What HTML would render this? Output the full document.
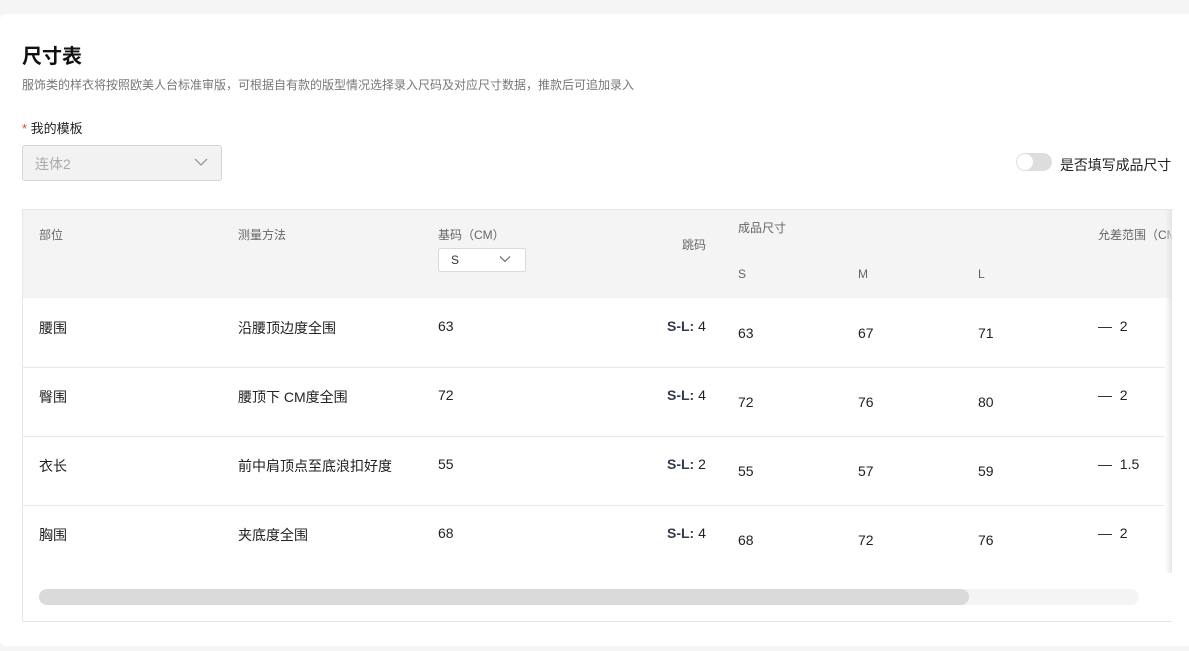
<!DOCTYPE html>
<html><head><meta charset="utf-8"><style>
*{margin:0;padding:0;box-sizing:border-box}
body{width:1189px;height:651px;background:#f5f5f5;font-family:"Liberation Sans","Noto Sans CJK SC",sans-serif;position:relative;overflow:hidden;color:#222}
.a{position:absolute;white-space:nowrap}
.card{position:absolute;left:0;top:14px;width:1189px;height:632px;background:#fff;border-radius:6px 0 0 6px}
.h{font-size:12px;color:#666}
.c{font-size:14px;color:#222}
.b{font-size:14px;color:#222}
.b b{color:#333a4d}
.line{position:absolute;left:23px;width:1142px;height:1px;background:#e8e8e8}
</style></head><body>
<div class="card"></div>
<div class="a" style="left:22px;top:40px;font-size:20px;font-weight:bold;color:#111">尺寸表</div>
<div class="a" style="left:22px;top:76px;font-size:12px;color:#777">服饰类的样衣将按照欧美人台标准审版，可根据自有款的版型情况选择录入尺码及对应尺寸数据，推款后可追加录入</div>
<div class="a" style="left:22px;top:118px;font-size:13px;color:#222"><span style="color:#e0463a">*</span> 我的模板</div>
<div class="a" style="left:22px;top:145px;width:200px;height:36px;background:#f2f2f2;border:1px solid #d6d6d6;border-radius:3px"></div>
<div class="a" style="left:35px;top:154px;font-size:14px;color:#aaa">连体2</div>
<svg class="a" style="left:194px;top:157px" width="14" height="10"><path d="M1 2l6 6 6-6" fill="none" stroke="#999" stroke-width="1.3"/></svg>
<div class="a" style="left:1016px;top:153px;width:36px;height:18px;border-radius:9px;background:#ddd"></div>
<div class="a" style="left:1017px;top:154px;width:16px;height:16px;border-radius:8px;background:#fff"></div>
<div class="a" style="left:1060px;top:155px;font-size:14px;color:#222;letter-spacing:-0.1px">是否填写成品尺寸</div>

<div class="a" style="left:22px;top:209px;width:1151px;height:413px;border:1px solid #e6e6e6;border-right:none;background:#fff"></div>
<div class="a" style="left:23px;top:210px;width:1149px;height:88px;background:#f4f4f4"></div>
<div class="a h" style="left:39px;top:226px">部位</div>
<div class="a h" style="left:238px;top:226px">测量方法</div>
<div class="a h" style="left:438px;top:226px">基码（CM）</div>
<div class="a" style="left:438px;top:248px;width:88px;height:24px;background:#fff;border:1px solid #d9d9d9;border-radius:2px"></div>
<div class="a" style="left:451px;top:253px;font-size:12px;color:#333">S</div>
<svg class="a" style="left:499px;top:255px" width="12" height="9"><path d="M1 1.5l5 5 5-5" fill="none" stroke="#777" stroke-width="1.3"/></svg>
<div class="a h" style="left:682px;top:236px">跳码</div>
<div class="a h" style="left:738px;top:219px">成品尺寸</div>
<div class="a h" style="left:738px;top:267px">S</div>
<div class="a h" style="left:858px;top:267px">M</div>
<div class="a h" style="left:978px;top:267px">L</div>
<div class="a h" style="left:1098px;top:226px">允差范围（CM</div>

<div class="line" style="top:367px"></div>
<div class="line" style="top:436px"></div>
<div class="line" style="top:505px"></div>

<div class="a c" style="left:39px;top:318px">腰围</div><div class="a c" style="left:238px;top:318px">沿腰顶边度全围</div><div class="a c" style="left:438px;top:318px">63</div><div class="a b" style="left:667px;top:318px"><b>S-L:</b> 4</div><div class="a c" style="left:738px;top:325px">63</div><div class="a c" style="left:858px;top:325px">67</div><div class="a c" style="left:978px;top:325px">71</div><div class="a c" style="left:1098px;top:318px">—&nbsp; 2</div>
<div class="a c" style="left:39px;top:387px">臀围</div><div class="a c" style="left:238px;top:387px">腰顶下 CM度全围</div><div class="a c" style="left:438px;top:387px">72</div><div class="a b" style="left:667px;top:387px"><b>S-L:</b> 4</div><div class="a c" style="left:738px;top:394px">72</div><div class="a c" style="left:858px;top:394px">76</div><div class="a c" style="left:978px;top:394px">80</div><div class="a c" style="left:1098px;top:387px">—&nbsp; 2</div>
<div class="a c" style="left:39px;top:456px">衣长</div><div class="a c" style="left:238px;top:456px">前中肩顶点至底浪扣好度</div><div class="a c" style="left:438px;top:456px">55</div><div class="a b" style="left:667px;top:456px"><b>S-L:</b> 2</div><div class="a c" style="left:738px;top:463px">55</div><div class="a c" style="left:858px;top:463px">57</div><div class="a c" style="left:978px;top:463px">59</div><div class="a c" style="left:1098px;top:456px">—&nbsp; 1.5</div>
<div class="a c" style="left:39px;top:525px">胸围</div><div class="a c" style="left:238px;top:525px">夹底度全围</div><div class="a c" style="left:438px;top:525px">68</div><div class="a b" style="left:667px;top:525px"><b>S-L:</b> 4</div><div class="a c" style="left:738px;top:532px">68</div><div class="a c" style="left:858px;top:532px">72</div><div class="a c" style="left:978px;top:532px">76</div><div class="a c" style="left:1098px;top:525px">—&nbsp; 2</div>

<div class="a" style="left:1165px;top:210px;width:8px;height:363px;background:linear-gradient(to right,rgba(230,230,230,0),#e2e2e2)"></div>
<div class="a" style="left:1172px;top:210px;width:17px;height:412px;background:#fff"></div>

<div class="a" style="left:39px;top:589px;width:1100px;height:16px;border-radius:8px;background:#f4f4f4"></div>
<div class="a" style="left:39px;top:589px;width:930px;height:16px;border-radius:8px;background:#dadada"></div>
</body></html>
